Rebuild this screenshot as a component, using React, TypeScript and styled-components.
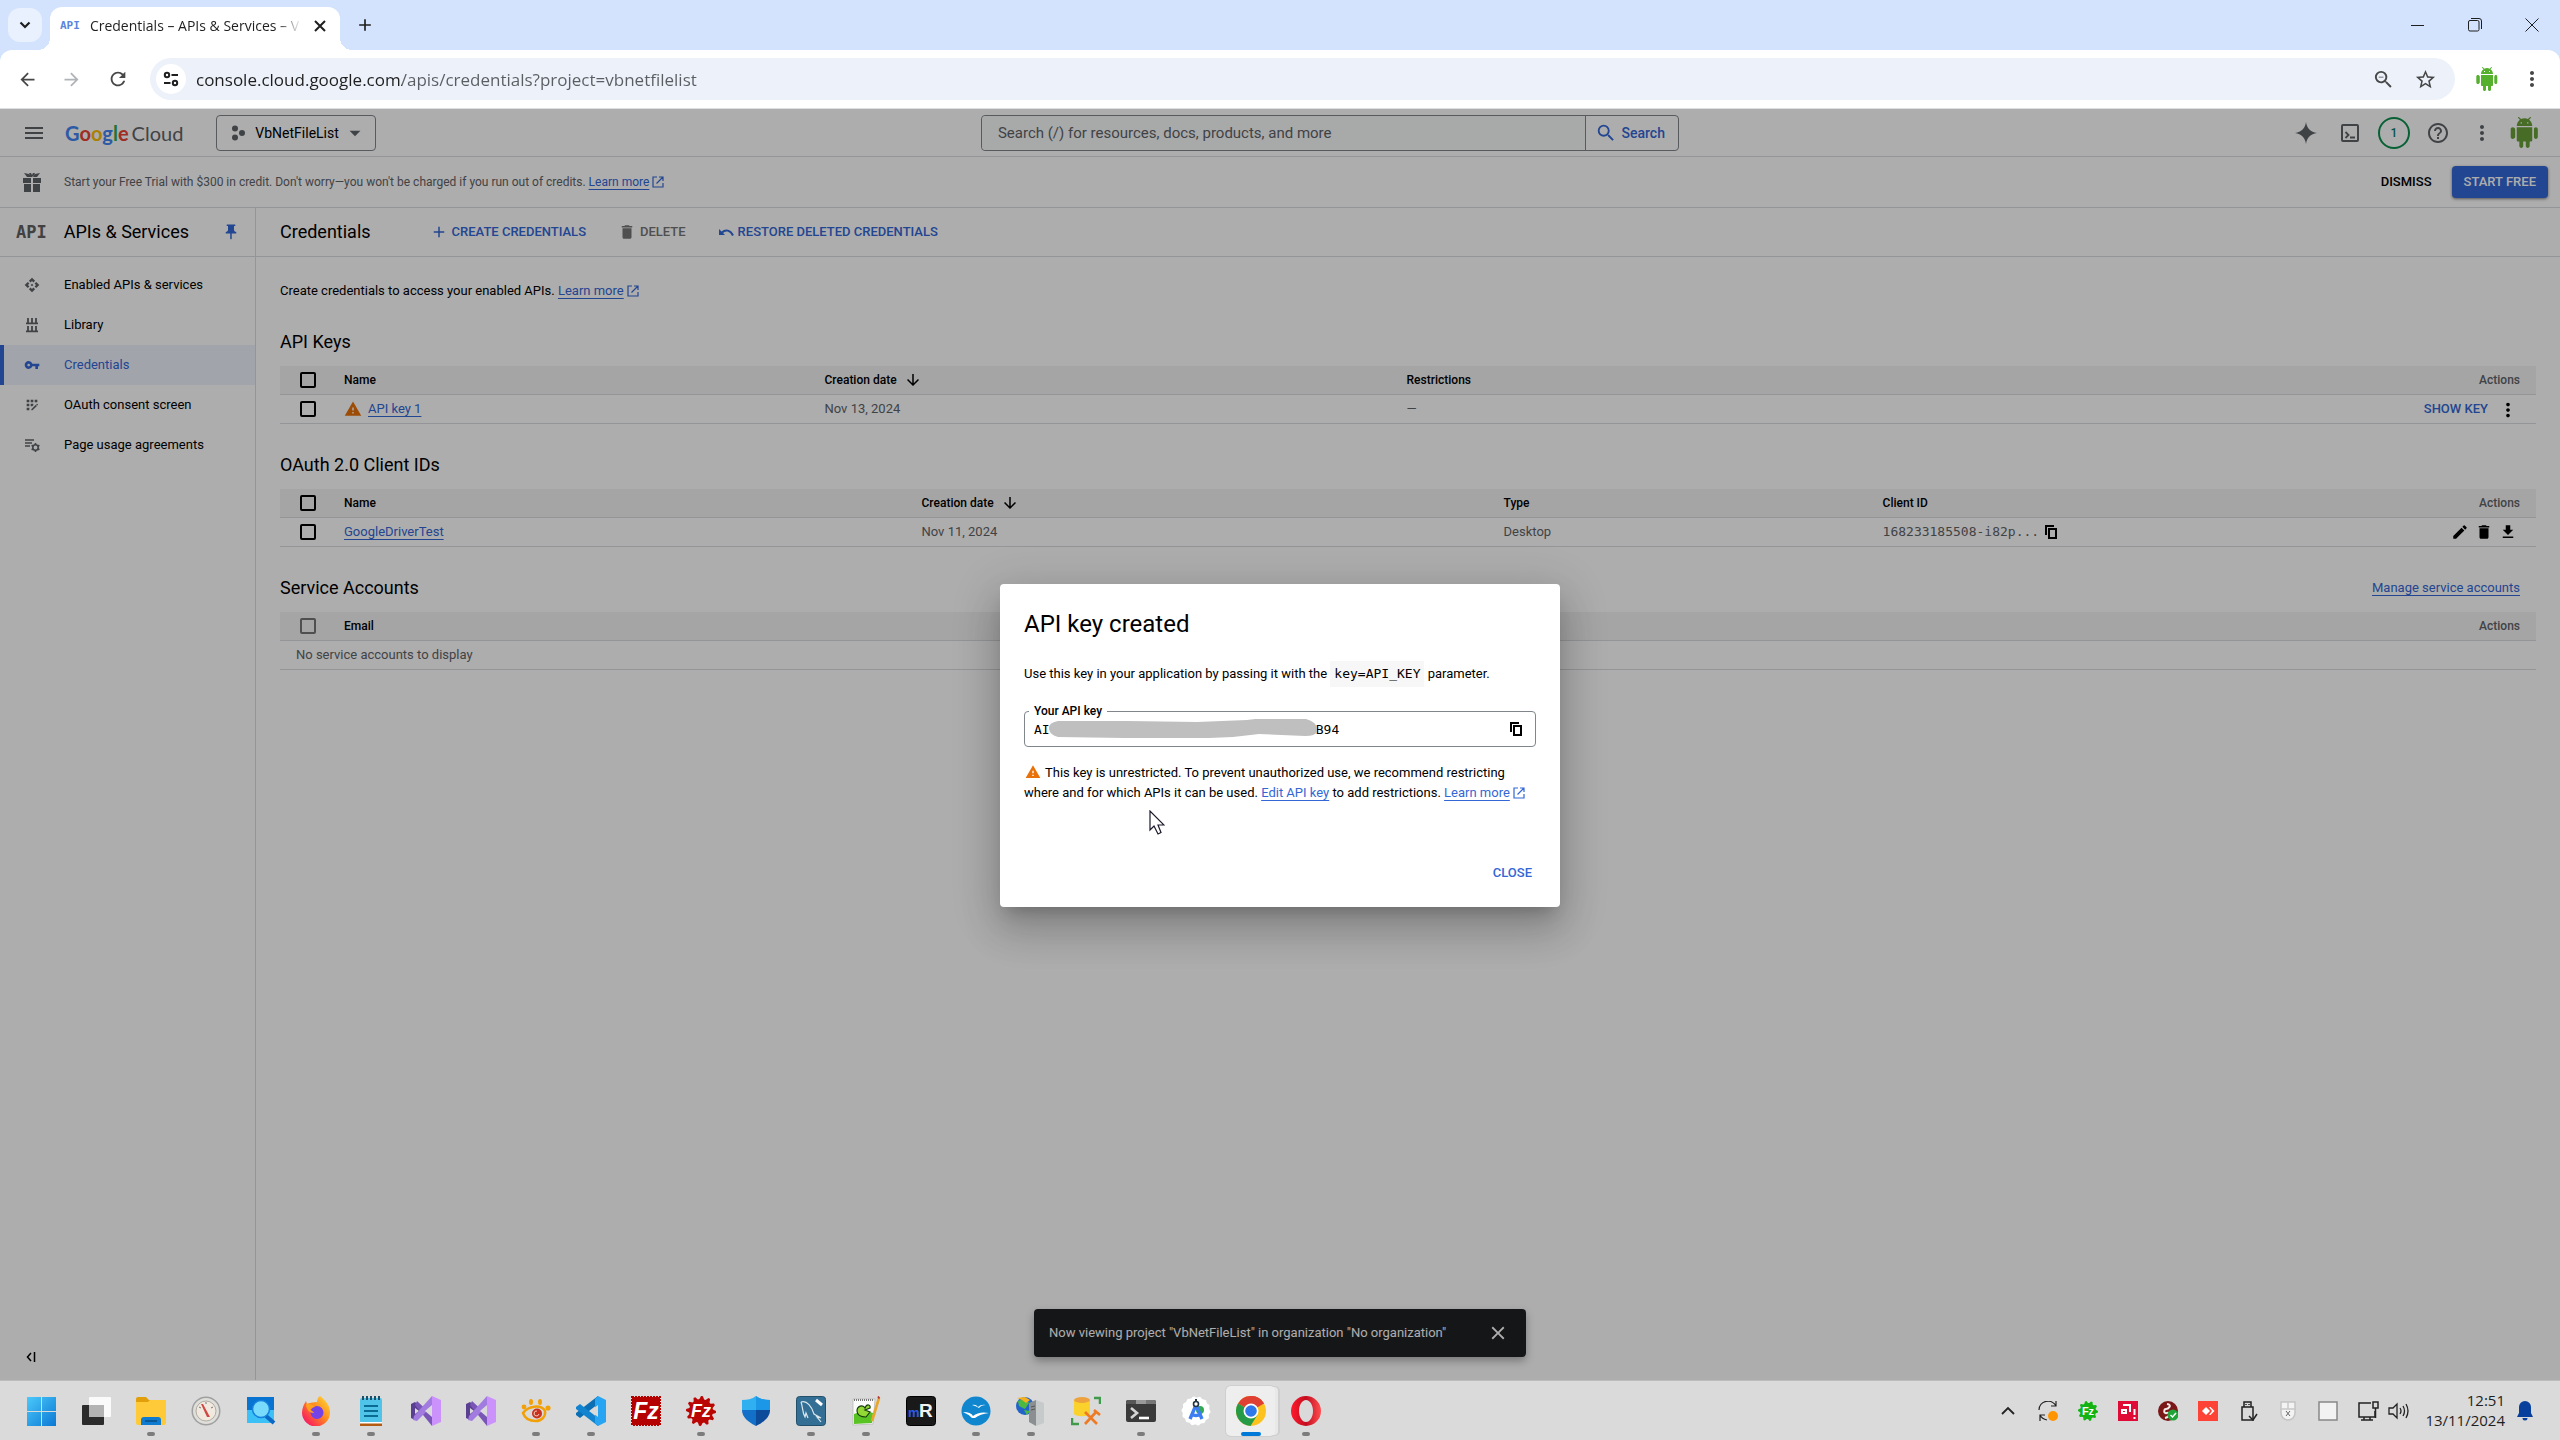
import React from "react";
import styled, { createGlobalStyle, css } from "styled-components";
import {
  MdMenu, MdSearch, MdHelpOutline, MdMoreVert, MdPushPin, MdAdd, MdDelete, MdVpnKey, MdWarning,
  MdEdit, MdFileDownload, MdApi, MdArrowDownward, MdClose, MdArrowDropDown,
  MdZoomOut, MdStarBorder, MdArrowBack, MdArrowForward, MdRefresh, MdAppRegistration,
} from "react-icons/md";

const roboto = `Roboto, "Liberation Sans", sans-serif`;
const segoe = `"Open Sans", "Noto Sans", sans-serif`;
const mono = `"DejaVu Sans Mono", "Liberation Mono", monospace`;
const blue = "#3367d6";
const grey = "#5f6368";
const line = "#dadce0";

const GlobalStyle = createGlobalStyle`
  *, *::before, *::after { box-sizing: border-box; }
  body { margin: 0; overflow: hidden; font-family: ${roboto}; color: #000; }
  button { font: inherit; border: 0; background: none; padding: 0; color: inherit; cursor: pointer; }
  h1, h2, p { margin: 0; font-weight: 400; }
  svg { display: block; flex: none; }
`;

const Screen = styled.div`
  display: flex;
  flex-direction: column;
  height: 100vh;
`;

/* ---------- browser ---------- */

const TabStrip = styled.header`
  display: flex;
  align-items: center;
  height: 50px;
  padding-left: 8px;
  background: #d3e3fd;
  color: #1f1f1f;
`;

const TabSearch = styled.button`
  display: grid;
  place-items: center;
  width: 34px;
  height: 34px;
  border-radius: 12px;
  background: #e9f1fe;
`;

const Tab = styled.div`
  position: relative;
  display: flex;
  align-items: center;
  gap: 10px;
  align-self: flex-end;
  width: 290px;
  height: 43px;
  margin-left: 8px;
  padding: 0 12px 6px 10px;
  border-radius: 12px 12px 0 0;
  background: #fff;
  font-family: ${segoe};
  font-size: 14px;
  &::before, &::after {
    content: "";
    position: absolute;
    bottom: 0;
    width: 12px;
    height: 12px;
  }
  &::before { right: 100%; background: radial-gradient(circle at 0 0, transparent 12px, #fff 12px); }
  &::after { left: 100%; background: radial-gradient(circle at 100% 0, transparent 12px, #fff 12px); }
`;

const TabTitle = styled.span`
  flex: 1;
  overflow: hidden;
  white-space: nowrap;
  mask-image: linear-gradient(to right, #000 88%, transparent);
`;

const ApiMark = styled.span<{ $small?: boolean }>`
  font-family: ${mono};
  font-weight: 700;
  line-height: 24px;
  font-size: ${p => (p.$small ? 11 : 17)}px;
  color: ${p => (p.$small ? "#5c85de" : "#616161")};
`;

const NewTab = styled.button`
  display: grid;
  place-items: center;
  width: 34px;
  height: 34px;
  margin-left: 8px;
`;

const WindowButtons = styled.div`
  display: flex;
  margin-left: auto;
`;

const WindowButton = styled.button`
  display: grid;
  place-items: center;
  width: 57px;
  height: 40px;
`;

const ToolbarBack = styled.div`
  background: #d3e3fd;
`;

const Toolbar = styled.div`
  display: flex;
  align-items: center;
  height: 59px;
  padding: 0 6px 0 7px;
  border-radius: 12px 12px 0 0;
  border-bottom: 1px solid #dcdfe3;
  background: #fff;
  color: #474747;
`;

const ToolButton = styled.button<{ $faded?: boolean; $width?: number }>`
  display: grid;
  place-items: center;
  width: ${p => p.$width ?? 45}px;
  height: 42px;
  color: ${p => (p.$faded ? "#b0b3b8" : "inherit")};
`;

const Omnibox = styled.div`
  display: flex;
  flex: 1;
  align-items: center;
  height: 42px;
  margin: 0 9px 0 10px;
  padding: 0 11px 0 6px;
  border-radius: 21px;
  background: #ecf1fa;
`;

const SiteInfo = styled.button`
  display: grid;
  place-items: center;
  width: 30px;
  height: 30px;
  margin-right: 10px;
  border-radius: 50%;
  background: #fff;
  color: #1f1f1f;
`;

const Address = styled.input`
  flex: 1;
  min-width: 0;
  border: 0;
  padding: 0;
  outline: 0;
  height: 32px;
  font-family: ${segoe};
  font-size: 17px;
  color: transparent;
  background: linear-gradient(to right, #1f1f1f 206px, #5a5d61 206px);
  background-clip: text;
`;

/* ---------- console ---------- */

const Console = styled.div`
  position: relative;
  display: flex;
  flex: 1;
  flex-direction: column;
  min-height: 0;
  background: #fff;
  font-size: 13px;
  line-height: 20px;
`;

const ConsoleHeader = styled.header`
  display: flex;
  align-items: center;
  justify-content: space-between;
  height: 48px;
  padding: 0 16px 0 22px;
  border-bottom: 1px solid ${line};
`;

const HeaderGroup = styled.div`
  display: flex;
  align-items: center;
  color: ${grey};
`;

const Logo = styled.a`
  display: flex;
  gap: 3px;
  margin: 0 33px 0 19px;
  font-family: Lato, sans-serif;
  font-size: 20px;
  line-height: 24px;
  text-decoration: none;
  color: ${grey};
`;

const LogoLetter = styled.span<{ $color: string }>`
  font-weight: 700;
  color: ${p => p.$color};
`;

const ProjectButton = styled.button`
  display: flex;
  align-items: center;
  gap: 3px;
  height: 36px;
  padding: 0 7px 0 13px;
  border: 1px solid #80868b;
  border-radius: 4px;
  font-size: 14px;
  color: #000;
  svg { color: ${grey}; }
`;

const ProjectName = styled.span`
  margin-left: 6px;
`;

const SearchForm = styled.form`
  display: flex;
  flex: 0 1 698px;
  height: 36px;
  border: 1px solid #80868b;
  border-radius: 4px;
`;

const SearchInput = styled.input`
  flex: 1;
  min-width: 0;
  border: 0;
  padding: 0 16px;
  border-radius: 4px;
  background: #f8f9fa;
  font-family: ${roboto};
  font-size: 15px;
  &::placeholder { color: ${grey}; opacity: 1; }
`;

const SearchButton = styled.button`
  display: flex;
  align-items: center;
  gap: 4px;
  padding: 0 13px 0 9px;
  border-left: 1px solid #80868b;
  font-size: 14px;
  font-weight: 500;
  color: ${blue};
`;

const IconButton = styled.button<{ $width?: number }>`
  display: grid;
  place-items: center;
  width: ${p => p.$width ?? 44}px;
  height: 36px;
`;

const TrialBadge = styled.span`
  display: grid;
  place-items: center;
  width: 32px;
  height: 32px;
  border: 2px solid #0d904f;
  border-radius: 50%;
  font-size: 12px;
  font-weight: 500;
  color: #0d7a6f;
`;

const Banner = styled.div`
  display: flex;
  align-items: center;
  height: 51px;
  padding: 0 12px 0 20px;
  border-bottom: 1px solid ${line};
  font-size: 12px;
  color: ${grey};
`;

const BannerText = styled.p`
  flex: 1;
  margin-left: 20px;
`;

const TextLink = styled.a`
  color: ${blue};
  text-decoration: underline;
  text-underline-offset: 3px;
`;

const ExternalMark = styled.svg`
  display: inline-block;
  margin-left: 3px;
  vertical-align: -2px;
  color: ${blue};
`;

const DismissButton = styled.button`
  height: 32px;
  padding: 0 20px;
  font-size: 13px;
  font-weight: 500;
  color: #000;
`;

const StartButton = styled.button`
  height: 32px;
  padding: 0 12px;
  border-radius: 4px;
  background: ${blue};
  box-shadow: 0 1px 3px rgba(0, 0, 0, 0.5);
  font-size: 13px;
  font-weight: 500;
  color: #fff;
`;

const Columns = styled.div`
  display: flex;
  flex: 1;
  min-height: 0;
`;

const Sidebar = styled.nav`
  display: flex;
  flex: none;
  flex-direction: column;
  width: 256px;
  border-right: 1px solid ${line};
`;

const SidebarTitle = styled.div`
  display: flex;
  align-items: center;
  justify-content: space-between;
  height: 49px;
  padding: 0 15px 0 16px;
  border-bottom: 1px solid ${line};
  color: ${blue};
`;

const SidebarHeading = styled.h2`
  display: flex;
  gap: 17px;
  font-size: 18px;
  line-height: 24px;
  color: #000;
`;

const NavList = styled.ul`
  flex: 1;
  margin: 0;
  padding: 8px 0 0;
  list-style: none;
`;

const NavLink = styled.a<{ $active?: boolean }>`
  display: flex;
  align-items: center;
  gap: 24px;
  height: 40px;
  padding-left: 20px;
  border-left: 4px solid transparent;
  text-decoration: none;
  color: #000;
  svg { color: ${grey}; }
  ${p => p.$active && css`
    border-color: ${blue};
    background: #edf2fd;
    color: ${blue};
    svg { color: ${blue}; }
  `}
`;

const CollapseButton = styled.button`
  display: grid;
  place-items: center;
  width: 62px;
  height: 46px;
`;

const Main = styled.main`
  flex: 1;
  min-width: 0;
`;

const ActionBar = styled.div`
  display: flex;
  align-items: center;
  height: 49px;
  padding-left: 24px;
  border-bottom: 1px solid ${line};
`;

const PageTitle = styled.h1`
  margin-right: 59px;
  font-size: 18px;
  line-height: 24px;
`;

const ActionButton = styled.button`
  display: flex;
  align-items: center;
  gap: 4px;
  margin-right: 32px;
  font-weight: 500;
  color: ${blue};
  &:disabled { color: #757575; cursor: default; }
`;

const Content = styled.div`
  padding: 24px 24px 0;
`;

const Section = styled.section`
  margin-top: 17px;
`;

const SectionHead = styled.div`
  display: flex;
  align-items: center;
  justify-content: space-between;
  height: 48px;
  padding-right: 16px;
`;

const SectionTitle = styled.h2`
  font-size: 18px;
  line-height: 24px;
`;

const Table = styled.table`
  width: 100%;
  table-layout: fixed;
  border-collapse: separate;
  border-spacing: 0;
`;

const Col = styled.col<{ $width?: string }>`
  width: ${p => p.$width ?? "auto"};
`;

const cell = css<{ $end?: boolean }>`
  height: 29px;
  padding: 0 8px;
  border-bottom: 1px solid ${line};
  text-align: ${p => (p.$end ? "right" : "left")};
  white-space: nowrap;
  &:first-child { padding-left: 20px; }
  &:last-child { padding-right: 16px; }
`;

const Th = styled.th`
  ${cell}
  background: #f3f3f3;
  font-size: 12px;
  font-weight: 500;
  color: ${p => (p.$end ? grey : "#000")};
`;

const Td = styled.td<{ $wide?: boolean }>`
  ${cell}
  color: ${grey};
  ${p => p.$wide && css`&:first-child { padding-left: 16px; }`}
`;

const Tick = styled.input`
  display: block;
  appearance: none;
  width: 16px;
  height: 16px;
  margin: 0;
  border: 2px solid #000;
  border-radius: 2px;
  &:disabled { border-color: #757575; }
`;

const CellLine = styled.span<{ $gap?: number; $end?: boolean }>`
  display: flex;
  align-items: center;
  gap: ${p => p.$gap ?? 8}px;
  height: 20px;
  justify-content: ${p => (p.$end ? "flex-end" : "flex-start")};
`;

const RowAction = styled.button`
  display: grid;
  place-items: center;
  min-width: 24px;
  height: 20px;
  color: #000;
`;

const ShowKey = styled.button`
  font-weight: 500;
  color: ${blue};
`;

const MonoText = styled.span`
  font-family: ${mono};
  font-size: 13px;
`;

const Snackbar = styled.div`
  position: absolute;
  left: 50%;
  bottom: 23px;
  display: flex;
  align-items: center;
  justify-content: space-between;
  width: 492px;
  height: 48px;
  padding: 0 17px 0 15px;
  transform: translateX(-50%);
  border-radius: 4px;
  background: #202124;
  box-shadow: 0 4px 8px rgba(0, 0, 0, 0.3);
  color: #fff;
`;

/* ---------- dialog ---------- */

const Scrim = styled.div`
  position: absolute;
  inset: 0;
  display: grid;
  place-items: center;
  padding-top: 2px;
  background: rgba(0, 0, 0, 0.32);
`;

const Dialog = styled.div`
  position: relative;
  width: 560px;
  padding: 24px 24px 16px;
  border-radius: 4px;
  background: #fff;
  box-shadow: 0 11px 15px -7px rgba(0, 0, 0, 0.2), 0 24px 38px 3px rgba(0, 0, 0, 0.14), 0 9px 46px 8px rgba(0, 0, 0, 0.12);
`;

const DialogTitle = styled.h2`
  margin-bottom: 21px;
  font-size: 24px;
  line-height: 32px;
`;

const DialogText = styled.p`
  line-height: 26px;
`;

const Code = styled.code`
  display: inline-block;
  padding: 0 4px;
  background: #f7f7f7;
  font-family: ${mono};
  font-size: 13px;
`;

const KeyField = styled.fieldset`
  position: relative;
  display: flex;
  align-items: flex-start;
  min-width: 0;
  height: 44px;
  margin: 16px 0;
  padding: 0 7px 0 9px;
  border: 1px solid #80868b;
  border-radius: 4px;
`;

const KeyLegend = styled.legend`
  margin-left: -5px;
  padding: 0 5px;
  font-size: 12px;
  font-weight: 500;
  line-height: 16px;
`;

const KeyInput = styled.input`
  flex: 1;
  min-width: 0;
  height: 20px;
  padding: 0;
  border: 0;
  outline: 0;
  font-family: ${mono};
  font-size: 13px;
`;

const Redaction = styled.svg`
  position: absolute;
  left: 24px;
  top: 0;
`;

const Warning = styled.p`
  svg { display: inline-block; }
`;

const WarningMark = styled(MdWarning)`
  margin: 0 4px 0 1px;
  vertical-align: -3px;
  color: #e8710a;
`;

const DialogActions = styled.div`
  display: flex;
  justify-content: flex-end;
  margin: 52px -4px 0 0;
`;

const CloseButton = styled.button`
  height: 36px;
  padding: 0 8px;
  font-weight: 500;
  color: ${blue};
`;

const Pointer = styled.svg`
  position: absolute;
  left: 149px;
  top: 226px;
`;

/* ---------- taskbar ---------- */

const Taskbar = styled.footer`
  display: flex;
  flex: none;
  align-items: center;
  justify-content: space-between;
  height: 60px;
  padding: 0 15px 0 13px;
  border-top: 1px solid #bdbdbd;
  background: #dadada;
`;

const Apps = styled.div`
  display: flex;
`;

const AppButton = styled.button<{ $state?: "open" | "active" }>`
  position: relative;
  display: grid;
  place-items: center;
  width: 49px;
  height: 50px;
  margin: 0 3px;
  border-radius: 5px;
  ${p => p.$state === "active" && css`
    background: #eeeeee;
    box-shadow: 4px 0 0 -1px #e8e8e8, 0 0 0 1px #cfcfcf, 5px 0 0 0 #cfcfcf;
  `}
  ${p => p.$state && css`
    &::after {
      content: "";
      position: absolute;
      bottom: 0;
      width: ${p.$state === "active" ? 20 : 8}px;
      height: 4px;
      border-radius: 2px;
      background: ${p.$state === "active" ? "#0078d7" : "#7c7c7c"};
    }
  `}
`;

const Tray = styled.div`
  display: flex;
  align-items: center;
  font-family: ${segoe};
  color: #1f1f1f;
`;

const TrayButton = styled.button<{ $width?: number }>`
  display: grid;
  place-items: center;
  width: ${p => p.$width ?? 40}px;
  height: 40px;
`;

const Clock = styled.time`
  width: 97px;
  padding-bottom: 2px;
  font-size: 15px;
  line-height: 20px;
  text-align: right;
`;

/* ---------- drawings ---------- */

const Android = ({ size, color }: { size: number; color: string }) => (
  <svg width={size} height={size} viewBox="0 0 24 24" fill={color}>
    <path d="M6 18c0 .55.45 1 1 1h1v3.5c0 .83.67 1.5 1.5 1.5s1.5-.67 1.5-1.5V19h2v3.5c0 .83.67 1.5 1.5 1.5s1.5-.67 1.5-1.5V19h1c.55 0 1-.45 1-1V8H6v10zM2.800 8C1.970 8 1.300 8.670 1.300 9.500v6c0 .83.67 1.500 1.500 1.500S4.800 16.330 4.800 15.500v-6C4.800 8.670 3.630 8 2.800 8zm18 0c-.83 0-1.500.67-1.500 1.500v6c0 .83.67 1.500 1.500 1.500s1.500-.67 1.500-1.500v-6c0-.83-.67-1.500-1.500-1.500zM15.530 2.160l1.300-1.300c.2-.2.2-.51 0-.71-.2-.2-.51-.2-.71 0l-1.480 1.480C13.850 1.230 12.950 1 12 1c-.96 0-1.860.23-2.660.63L7.850.15c-.2-.2-.51-.2-.71 0-.2.2-.2.51 0 .71l1.310 1.310C6.970 3.260 6 5.010 6 7h12c0-1.990-.97-3.750-2.470-4.840zM10 5H9V4h1v1zm5 0h-1V4h1v1z" />
  </svg>
);

const External = () => (
  <ExternalMark width="12" height="12" viewBox="0 0 12 12" fill="none" stroke="currentColor" strokeWidth="1.200">
    <path d="M5 1H1v10h10V7M7 1h4v4M11 1 4.500 7.500" />
  </ExternalMark>
);

const Copy = () => (
  <svg width="14" height="16" viewBox="0 0 14 16" fill="none" stroke="currentColor" strokeWidth="2"><path d="M2 11V2h8" /><path d="M5 5h7v9H5z" /></svg>
);

const Sparkle = () => (
  <svg width="22" height="22" viewBox="0 0 22 22" fill="currentColor"><path d="M11 0c.9 6.500 4.500 10.100 11 11-6.500.9-10.100 4.500-11 11-.9-6.500-4.500-10.100-11-11C6.500 10.100 10.100 6.500 11 0z" /></svg>
);

const Shell = () => (
  <svg width="18" height="18" viewBox="0 0 18 18" fill="none" stroke="currentColor" strokeWidth="2"><rect x="1" y="1" width="16" height="16" rx="1" /><path d="m4.500 8 3 3-3 3M9 13.500h5" strokeWidth="1.800" /></svg>
);

const ProjectIcon = () => (
  <svg width="16" height="16" viewBox="0 0 16 16" fill="currentColor"><circle cx="5" cy="3.500" r="3" /><circle cx="5" cy="12.500" r="3" /><circle cx="12" cy="8" r="3" /></svg>
);

const Gift = () => (
  <svg width="24" height="24" viewBox="0 0 24 24" fill="currentColor"><path d="M3 8h8v5H3zM13 8h8v5h-8zM4 14h7v8H4zM13 14h7v8h-7zM4 3l5 1 3 3H7zM20 3l-5 1-3 3h5zM9 3h2l1 2 1-2h2l-2 4h-2z" /></svg>
);

const Restore = () => (
  <svg width="16" height="16" viewBox="0 0 16 16" fill="none" stroke="currentColor" strokeWidth="2"><path d="M1 5v6h6L1 5z" fill="currentColor" stroke="none" /><path d="M4 8.500c3.500-3.500 8.500-2.500 11 3" /></svg>
);

const LibraryIcon = () => (
  <svg width="16" height="16" viewBox="0 0 16 16" fill="none" stroke="currentColor" strokeWidth="1.800"><path d="M2 6.300h12M4 1v5M8 1v5M12 1v5M2 14.300h12M4 9v5M8 9v5M12 9v5" /></svg>
);

const Agreements = () => (
  <svg width="16" height="16" viewBox="0 0 16 16" fill="none" stroke="currentColor" strokeWidth="1.600"><path d="M1 3h9M1 6h7M1 9h5" /><circle cx="11.500" cy="10.500" r="2.700" /><path d="M11.500 6v2M11.500 13v2M7.600 8.200l1.600 1M13.800 11.800l1.600 1M7.600 12.800l1.600-1M13.800 9.200l1.600-1" /></svg>
);

const SiteTune = () => (
  <svg width="16" height="16" viewBox="0 0 16 16" fill="none" stroke="currentColor" strokeWidth="2"><circle cx="4" cy="4" r="2.200" /><path d="M8.500 4H15M1 12h6.500" /><circle cx="12" cy="12" r="2.200" /></svg>
);

const VisualStudio = () => (
  <svg width="30" height="30" viewBox="0 0 30 30"><path d="M0 8l4-2 10 9-10 9-4-2z" fill="#5b3f91" /><path d="M4 12v6l4-3z" fill="#dadada" /><path d="M21 0v30L4 9l2-4 15 14z" fill="#7a55b8" /><path d="M21 0v10L6 25l-4-1 1-4z" fill="#a27be0" /><path d="M21 0l9 4v22l-9 4z" fill="#cc92fb" /><path d="M21 9v12l-7-6z" fill="#dadada" /></svg>
);

const gear = (cx: number, cy: number, r: number, n: number, depth: number) =>
  Array.from({ length: n * 4 }, (_, i) => {
    const a = (i / (n * 4)) * Math.PI * 2;
    const d = i % 4 < 2 ? r : r - depth;
    return `${(cx + d * Math.cos(a)).toFixed(2)},${(cy + d * Math.sin(a)).toFixed(2)}`;
  }).join(" ");

const Fz = ({ size = 22, x = 15, y = 23 }: { size?: number; x?: number; y?: number }) => (
  <text x={x} y={y} fontFamily="Liberation Sans" fontWeight="700" fontStyle="italic" fontSize={size} fill="#fff" textAnchor="middle">Fz</text>
);

const pic = (body: React.ReactNode) => <svg width="30" height="30" viewBox="0 0 30 30">{body}</svg>;

const apps: { name: string; state?: "open" | "active"; icon: React.ReactNode }[] = [
  { name: "Start", icon: pic(<><defs><linearGradient id="win" x1="0" y1="0" x2="1" y2="1" gradientUnits="objectBoundingBox"><stop stopColor="#4cc9fb" /><stop offset="1" stopColor="#0a78d4" /></linearGradient></defs><path d="M1 1h14v14H1zM16 1h14v14H16zM1 16h14v14H1zM16 16h14v14H16z" fill="url(#win)" /></>) },
  { name: "Task view", icon: pic(<><rect x="1" y="9" width="22" height="20" rx="1" fill="#2b2b2b" /><rect x="8" y="1" width="22" height="20" rx="1" fill="#fafafa" /><path d="M8 9h15v12H8z" fill="#b3b3b3" /></>) },
  { name: "File Explorer", state: "open", icon: pic(<><path d="M0 3q0-2 2-2h8l3 3h15q2 0 2 2v4H0z" fill="#e29f0c" /><path d="M0 6h12l2-2h16v23q0 2-2 2H2q-2 0-2-2z" fill="#ffca3a" /><path d="M5 29v-5q0-3 3-3h14q3 0 3 3v5z" fill="#0f7bd0" /><path d="M9 25h12" stroke="#074b85" strokeWidth="1.500" /></>) },
  { name: "Speed gauge", icon: pic(<><circle cx="15" cy="15" r="14.500" fill="#a0a0a0" /><circle cx="15" cy="15" r="13" fill="#dededb" /><circle cx="15" cy="15" r="10" fill="#f1e9df" stroke="#b3aca2" /><path d="m10 8 2 0 7 13-3 0z" fill="#cf4a42" /><path d="M8 11l2 1M22 11l-2 1M15 6v2" stroke="#777" /></>) },
  { name: "Search", icon: pic(<><path d="M1 1h27v13H1z" fill="#0873d1" /><path d="M1 14h27v13H1z" fill="#3cc1f7" /><path d="m20 20 8 7" stroke="#0b68c4" strokeWidth="4" /><circle cx="15" cy="13" r="8.500" fill="#79dbfb" stroke="#1580dd" strokeWidth="1.500" /></>) },
  { name: "Firefox", state: "open", icon: pic(<><defs><linearGradient id="fox" x1="1" y1="0" x2="0" y2="1"><stop stopColor="#ffe43a" /><stop offset=".45" stopColor="#ff8a1f" /><stop offset=".8" stopColor="#fb2b55" /><stop offset="1" stopColor="#e01290" /></linearGradient></defs><path d="M19 0c5 4 10 9 10 16a14 14 0 0 1-28 1C1 12 3 8 5 5l1 3 3-1c3-1 6-1 7-1 0-2 1-5 3-6z" fill="url(#fox)" /><circle cx="16" cy="16.500" r="6.500" fill="#7542e5" /><path d="M5 8c4-1 7 1 9 3-2 0-4 1-5 3 2 1 3 1 4 3-4 0-8-3-8-9z" fill="#ffa11d" /></>) },
  { name: "Notepad", state: "open", icon: pic(<><rect x="4" y="2" width="22" height="25" rx="2" fill="#4fc3e8" /><path d="M4 27h22v3H4z" fill="#b35a13" /><path d="M4 26h22v1.500H4z" fill="#fff" /><path d="M8 10h14M8 15h14M8 20h14" stroke="#0b6c93" strokeWidth="2" /><path d="M7 0v4M11 0v4M15 0v4M19 0v4M23 0v4" stroke="#184f6b" strokeWidth="2" /></>) },
  { name: "Visual Studio", icon: <VisualStudio /> },
  { name: "Visual Studio Preview", icon: <VisualStudio /> },
  { name: "XnView", state: "open", icon: pic(<><path d="M2 17c5-7 18-9 22-2 1 6-4 10-9 10-6 0-11-2-13-8z" fill="none" stroke="#f2a007" strokeWidth="2.500" /><circle cx="16" cy="17.500" r="5" fill="#c9301d" /><path d="M16 15a2.500 2.500 0 1 0 2 3" stroke="#f2cdbd" fill="none" /><circle cx="3" cy="11" r="2.400" fill="#f2a007" /><ellipse cx="10" cy="6" rx="2" ry="3" fill="#f2a007" /><ellipse cx="19" cy="6" rx="2" ry="3" fill="#f2a007" /><circle cx="27" cy="12" r="2.600" fill="#f2a007" /></>) },
  { name: "Visual Studio Code", state: "open", icon: pic(<><path d="M22 0v8L4 22l-4-3v-2z" fill="#0a6fb5" /><path d="M22 30v-8L4 8l-4 3v2z" fill="#1284cf" /><path d="M22 0l8 4v22l-8 4-3-3V3z" fill="#27a4f2" /><path d="M22 9v12l-8-6z" fill="#dadada" /></>) },
  { name: "FileZilla", icon: pic(<><rect x="1" y="1" width="28" height="28" fill="#b50000" stroke="#b50000" strokeWidth="2" strokeDasharray="2 1" /><Fz size={23} /></>) },
  { name: "FileZilla Server", state: "open", icon: pic(<><polygon points={gear(15, 15, 15, 12, 3)} fill="#b90504" /><Fz size={18} y={21} /></>) },
  { name: "Defender", icon: pic(<><path d="M15 0c4 3 9 4 14 4v10H1V4c5 0 10-1 14-4z" fill="#30b0f0" /><path d="M15 0c4 3 9 4 14 4v10H15z" fill="#1c96e6" /><path d="M1 14h14v16C7 26 1 21 1 14z" fill="#1270c8" /><path d="M29 14H15v16c8-4 14-9 14-16z" fill="#0b4b9a" /></>) },
  { name: "MySQL Workbench", state: "open", icon: pic(<><rect x=".5" y=".5" width="29" height="29" rx="3" fill="#336f94" stroke="#22506c" /><path d="M5 6c6-2 11 5 13 12l7 4-4-1 4 5M5 6c2 5 1 10 4 15l1-4 2 5" stroke="#dbe8f0" fill="none" strokeWidth="1.200" /><path d="m20 4 6 5" stroke="#fff" strokeWidth="3" /></>) },
  { name: "Notepad++", state: "open", icon: pic(<><path d="M2 3h22l-2 25-20 1z" fill="#fbfbfb" stroke="#aaa" strokeWidth=".6" /><path d="M3 18q10-5 19-1l-1 10-18 1z" fill="#58c322" /><path d="M6 15c0-5 6-7 8-3 2-5 6-3 5 0l-5 2 5 2-4 5c-5 0-9-2-9-6z" fill="#93d936" stroke="#183c10" strokeWidth="1.200" /><path d="M3 4h20" stroke="#777" strokeDasharray="1 1" strokeWidth="2" /><path d="M28 2 21 25" stroke="#e8a62b" strokeWidth="2.600" /><path d="m27 2 1.500-1" stroke="#b33" strokeWidth="2.600" /></>) },
  { name: "mRemoteNG", icon: pic(<><rect x=".5" y=".5" width="29" height="29" rx="3" fill="#191919" stroke="#000" /><text x="2" y="21" fontFamily="Liberation Sans" fontWeight="700" fontSize="13" fill="#2d5bea">m</text><text x="13" y="21" fontFamily="Liberation Sans" fontWeight="700" fontSize="19" fill="#f2f2f2">R</text></>) },
  { name: "OpenOffice", state: "open", icon: pic(<><circle cx="15" cy="15" r="14.500" fill="#1086cf" /><path d="M11 9q4-1 6 2 3-3 8-2-5 0-7 3-3-2-7-3zM2 16q8 0 10 4 6-5 16-3-9 1-14 5h-3q-4-4-9-6z" fill="#fff" /></>) },
  { name: "IIS Manager", state: "open", icon: pic(<><circle cx="9" cy="10" r="9" fill="#2263c9" /><path d="M2 5l8-3 3 5-4 6-6-3zM8 14l6 1-3 4z" fill="#4cb842" /><path d="M1 2l8-1 5 3-4 3-4-3z" fill="#f6b01c" /><path d="m13 7 7-3v26l-7-4z" fill="#8b8f91" /><path d="m20 4 8 3v20l-8 3z" fill="#c7cacb" /><path d="M15 11l4-1M15 14l4-1" stroke="#555" /></>) },
  { name: "Management Studio", icon: pic(<><path d="M3 4v14c2 3 14 3 16 0V4z" fill="#fbd22b" /><ellipse cx="11" cy="4" rx="8" ry="3" fill="#eda23f" /><path d="M23 2h6v6M1 22v6h7" fill="none" stroke="#3f9a4b" strokeWidth="2.500" /><path d="m14 16 12 12M26 15 14 28M23 14l6 5" stroke="#ee7a23" strokeWidth="2.600" /></>) },
  { name: "Terminal", state: "open", icon: pic(<><rect y="4" width="30" height="22" rx="2" fill="#3a3a3a" /><path d="M0 7q0-3 2-3h8v4H0z" fill="#565656" /><path d="M10 4h10v4H10z" fill="#999" /><path d="M20 4h8q2 0 2 3v1H20z" fill="#777" /><path d="m5 12 6 5-6 5" stroke="#d5d5d5" strokeWidth="2.600" fill="none" /><path d="M13 22h10" stroke="#fff" strokeWidth="2.600" /></>) },
  { name: "Android Studio", icon: pic(<><polygon points={gear(15, 15, 14.5, 14, 1)} fill="#fff" /><circle cx="19" cy="14" r="4" fill="#34a853" /><path d="M15 9 9 23M15 9l6 14M10 18q5 3 10 0" stroke="#3d7df2" strokeWidth="3.400" fill="none" /><circle cx="15" cy="8" r="2.500" fill="#fff" stroke="#234" strokeWidth="1.600" /><path d="M15 3v3" stroke="#234" strokeWidth="2" /></>) },
  { name: "Chrome", state: "active", icon: pic(<><circle cx="15" cy="15" r="15" fill="#fcc31e" /><path d="M15 15 2 7.500A15 15 0 0 1 28 7.500z" fill="#df4032" /><path d="M15 0A15 15 0 0 1 28 7.500H15z" fill="#df4032" /><path d="M2 7.500A15 15 0 0 0 14.500 30L21.500 18.700 15 15z" fill="#259b48" /><circle cx="15" cy="15" r="7.500" fill="#fff" /><circle cx="15" cy="15" r="5.800" fill="#2f78ea" /></>) },
  { name: "Opera", state: "open", icon: pic(<><defs><linearGradient id="opera" x1="0" x2="1"><stop stopColor="#ff1b2d" /><stop offset=".5" stopColor="#c30d20" /><stop offset="1" stopColor="#ff4e50" /></linearGradient></defs><path d="M15 0a15 15 0 1 0 0 30 15 15 0 0 0 0-30zm0 4c4 0 7 5 7 11s-3 11-7 11-7-5-7-11 3-11 7-11z" fill="url(#opera)" fillRule="evenodd" /></>) },
];

const tpic = (body: React.ReactNode, w = 20) => <svg width={w} height="20" viewBox={`0 0 ${w} 20`} fill="none" stroke="#222" strokeWidth="1.500">{body}</svg>;

const tray: { name: string; width?: number; icon: React.ReactNode }[] = [
  { name: "Show hidden icons", icon: tpic(<path d="m4 13 6-6 6 6" strokeWidth="1.800" />) },
  { name: "Update", icon: tpic(<><path d="M1 9a9 9 0 0 1 17-4M18 0v5h-5M2 20v-6h5M2 14q2 4 7 5" strokeWidth="1.200" /><circle cx="15" cy="15" r="5" fill="#ff9500" stroke="none" /></>) },
  { name: "FileZilla Server", icon: tpic(<><polygon points={gear(10, 10, 10, 10, 2)} fill="#12b312" stroke="none" /><text x="10" y="14" fontFamily="Liberation Sans" fontWeight="700" fontSize="11" fill="#fff" stroke="none" textAnchor="middle">Fz</text></>) },
  { name: "Graphics", icon: tpic(<><path d="M0 0h20v20H0z" fill="#df0b36" stroke="none" /><path d="M5 4h7v7M4 12V9h4v3z" stroke="#fff" strokeWidth="2" /><path d="M16.500 8v6M16.500 16v2" stroke="#fff" strokeWidth="2" /></>) },
  { name: "Scanner", icon: tpic(<><circle cx="10" cy="10" r="10" fill="#7c1717" stroke="none" /><path d="M9 3c6 1 1 5-1 5s-3 5 1 4 3 4-2 5" stroke="#f3eaea" strokeWidth="2" /><circle cx="15" cy="14" r="5.500" fill="#20a338" stroke="none" /><path d="m12.500 14 2 2 3.500-4" stroke="#fff" /></>) },
  { name: "Remote desktop", icon: tpic(<><path d="M0 0h20v20H0z" fill="#fe4336" stroke="none" /><path d="M8 6l4 4-4 4-4-4zM11 6l1.500 0 4 4-4 4H11l3-4z" fill="#fff" stroke="none" /></>) },
  { name: "Eject media", icon: tpic(<><path d="M6 6V1h7v5M4 6h11v13H4zM8 3v1M11 3v1" /><path d="m11 15 4 4 4-6" /></>) },
  { name: "Mouse", icon: tpic(<><path d="M3 1h14v11a7 7 0 0 1-14 0z" fill="#f3f3f3" stroke="#c4c4c4" /><path d="M3 8h14M10 1v7" stroke="#c8c8c8" /><path d="m8 10 4 5M12 10l-4 5" stroke="#666" strokeWidth="1" /></>) },
  { name: "Blank", icon: tpic(<rect x="1" y="1" width="18" height="18" fill="#f2f2f2" stroke="#888" />) },
  { name: "Network", icon: tpic(<><path d="M13 2H1v14h16v-6M6 16v3M12 16v3M3 19h12" /><path d="M15 1h5v6h-5zM17.500 7v10" /></>, 21) },
  { name: "Volume", width: 20, icon: tpic(<path d="M1 7h4l4-4v14l-4-4H1zM12 7q2 3 0 6M15 5q3 5 0 10M18 3q4 7 0 14" strokeWidth="1.300" />, 21) },
];

/* ---------- page ---------- */

const nav = [
  { text: "Enabled APIs & services", icon: <MdApi size={16} /> },
  { text: "Library", icon: <LibraryIcon /> },
  { text: "Credentials", icon: <MdVpnKey size={16} />, active: true },
  { text: "OAuth consent screen", icon: <MdAppRegistration size={16} /> },
  { text: "Page usage agreements", icon: <Agreements /> },
];

const letters: [string, string][] = [["G", "#4285f4"], ["o", "#ea4335"], ["o", "#fbbc04"], ["g", "#4285f4"], ["l", "#34a853"], ["e", "#ea4335"]];

const SortHead = () => <CellLine $gap={7}>Creation date <MdArrowDownward size={18} /></CellLine>;

const keyValue = "AI" + "\u00a0".repeat(34) + "B94";

export default function App() {
  return (
    <Screen>
      <GlobalStyle />
      <TabStrip>
        <TabSearch aria-label="Search tabs"><svg width="12" height="8" viewBox="0 0 12 8" fill="none" stroke="currentColor" strokeWidth="2.200"><path d="m1.500 1.500 4.500 4.500 4.500-4.500" /></svg></TabSearch>
        <Tab>
          <ApiMark $small>API</ApiMark>
          <TabTitle>Credentials – APIs & Services – V</TabTitle>
          <button aria-label="Close tab"><svg width="16" height="16" viewBox="0 0 16 16" stroke="currentColor" strokeWidth="2"><path d="m3 3 10 10M13 3 3 13" /></svg></button>
        </Tab>
        <NewTab aria-label="New tab"><MdAdd size={20} /></NewTab>
        <WindowButtons>
          <WindowButton aria-label="Minimise"><svg width="14" height="14" viewBox="0 0 14 14" stroke="currentColor"><path d="M0 7.500h13" /></svg></WindowButton>
          <WindowButton aria-label="Restore"><svg width="14" height="14" viewBox="0 0 14 14" fill="none" stroke="currentColor"><rect x=".5" y="2.500" width="10.500" height="10.500" rx="1.500" /><path d="M3 .5h8q2.500 0 2.500 2.500v8" /></svg></WindowButton>
          <WindowButton aria-label="Close"><svg width="14" height="14" viewBox="0 0 14 14" stroke="currentColor"><path d="m.5.5 13 13M13.500.5l-13 13" /></svg></WindowButton>
        </WindowButtons>
      </TabStrip>
      <ToolbarBack>
        <Toolbar>
          <ToolButton $width={40} aria-label="Back"><MdArrowBack size={21} /></ToolButton>
          <ToolButton $width={48} $faded aria-label="Forward"><MdArrowForward size={21} /></ToolButton>
          <ToolButton aria-label="Reload"><MdRefresh size={22} /></ToolButton>
          <Omnibox>
            <SiteInfo aria-label="Site information"><SiteTune /></SiteInfo>
            <Address aria-label="Address" defaultValue="console.cloud.google.com/apis/credentials?project=vbnetfilelist" />
            <ToolButton aria-label="Zoom"><MdZoomOut size={23} /></ToolButton>
            <ToolButton $width={38} aria-label="Bookmark"><MdStarBorder size={23} /></ToolButton>
          </Omnibox>
          <ToolButton aria-label="Profile"><Android size={24} color="#55b02e" /></ToolButton>
          <ToolButton aria-label="Menu"><MdMoreVert size={24} /></ToolButton>
        </Toolbar>
      </ToolbarBack>

      <Console>
        <ConsoleHeader>
          <HeaderGroup>
            <IconButton $width={24} aria-label="Navigation menu"><MdMenu size={24} /></IconButton>
            <Logo href="#home">
              <span>{letters.map(([l, c], i) => <LogoLetter key={i} $color={c}>{l}</LogoLetter>)}</span>
              <span>Cloud</span>
            </Logo>
            <ProjectButton><ProjectIcon /><ProjectName>VbNetFileList</ProjectName><MdArrowDropDown size={26} /></ProjectButton>
          </HeaderGroup>
          <SearchForm onSubmit={e => e.preventDefault()}>
            <SearchInput aria-label="Search" placeholder="Search (/) for resources, docs, products, and more" />
            <SearchButton><MdSearch size={22} />Search</SearchButton>
          </SearchForm>
          <HeaderGroup>
            <IconButton aria-label="Gemini"><Sparkle /></IconButton>
            <IconButton aria-label="Cloud Shell"><Shell /></IconButton>
            <IconButton aria-label="Notifications"><TrialBadge>1</TrialBadge></IconButton>
            <IconButton aria-label="Help"><MdHelpOutline size={24} /></IconButton>
            <IconButton aria-label="More"><MdMoreVert size={24} /></IconButton>
            <IconButton $width={40} aria-label="Account"><Android size={31} color="#689f38" /></IconButton>
          </HeaderGroup>
        </ConsoleHeader>

        <Banner>
          <Gift />
          <BannerText>
            Start your Free Trial with $300 in credit. Don't worry—you won't be charged if you run out of credits. <TextLink href="#trial">Learn more</TextLink><External />
          </BannerText>
          <DismissButton>DISMISS</DismissButton>
          <StartButton>START FREE</StartButton>
        </Banner>

        <Columns>
          <Sidebar>
            <SidebarTitle>
              <SidebarHeading><ApiMark>API</ApiMark>APIs & Services</SidebarHeading>
              <MdPushPin size={18} />
            </SidebarTitle>
            <NavList>
              {nav.map(n => <li key={n.text}><NavLink href="#nav" $active={n.active}>{n.icon}{n.text}</NavLink></li>)}
            </NavList>
            <CollapseButton aria-label="Collapse menu"><svg width="10" height="10" viewBox="0 0 10 10" fill="none" stroke="#000" strokeWidth="1.500"><path d="M5 1 1.500 5 5 9M8.500 0v10" /></svg></CollapseButton>
          </Sidebar>

          <Main>
            <ActionBar>
              <PageTitle>Credentials</PageTitle>
              <ActionButton><MdAdd size={18} />CREATE CREDENTIALS</ActionButton>
              <ActionButton disabled><MdDelete size={18} />DELETE</ActionButton>
              <ActionButton><Restore />RESTORE DELETED CREDENTIALS</ActionButton>
            </ActionBar>
            <Content>
              <p>Create credentials to access your enabled APIs. <TextLink href="#learn">Learn more</TextLink><External /></p>

              <Section>
                <SectionHead><SectionTitle>API Keys</SectionTitle></SectionHead>
                <Table>
                  <colgroup><Col $width="56px" /><Col $width="21.3%" /><Col $width="25.8%" /><Col /><Col $width="160px" /></colgroup>
                  <thead><tr>
                    <Th><Tick type="checkbox" aria-label="Select all API keys" /></Th><Th>Name</Th><Th><SortHead /></Th><Th>Restrictions</Th><Th $end>Actions</Th>
                  </tr></thead>
                  <tbody><tr>
                    <Td><Tick type="checkbox" aria-label="Select API key 1" /></Td>
                    <Td><CellLine $gap={6}><MdWarning size={18} color="#e8710a" /><TextLink href="#key">API key 1</TextLink></CellLine></Td>
                    <Td>Nov 13, 2024</Td>
                    <Td>—</Td>
                    <Td><CellLine $end><ShowKey>SHOW KEY</ShowKey><RowAction aria-label="More actions"><MdMoreVert size={22} /></RowAction></CellLine></Td>
                  </tr></tbody>
                </Table>
              </Section>

              <Section>
                <SectionHead><SectionTitle>OAuth 2.0 Client IDs</SectionTitle></SectionHead>
                <Table>
                  <colgroup><Col $width="56px" /><Col $width="25.6%" /><Col $width="25.8%" /><Col $width="16.8%" /><Col /><Col $width="160px" /></colgroup>
                  <thead><tr>
                    <Th><Tick type="checkbox" aria-label="Select all clients" /></Th><Th>Name</Th><Th><SortHead /></Th><Th>Type</Th><Th>Client ID</Th><Th $end>Actions</Th>
                  </tr></thead>
                  <tbody><tr>
                    <Td><Tick type="checkbox" aria-label="Select GoogleDriverTest" /></Td>
                    <Td><TextLink href="#client">GoogleDriverTest</TextLink></Td>
                    <Td>Nov 11, 2024</Td>
                    <Td>Desktop</Td>
                    <Td><CellLine $gap={0}><MonoText>168233185508-i82p...</MonoText><RowAction aria-label="Copy client ID"><Copy /></RowAction></CellLine></Td>
                    <Td><CellLine $gap={0} $end>
                      <RowAction aria-label="Edit"><MdEdit size={18} /></RowAction>
                      <RowAction aria-label="Delete"><MdDelete size={18} /></RowAction>
                      <RowAction aria-label="Download"><MdFileDownload size={18} /></RowAction>
                    </CellLine></Td>
                  </tr></tbody>
                </Table>
              </Section>

              <Section>
                <SectionHead><SectionTitle>Service Accounts</SectionTitle><TextLink href="#manage">Manage service accounts</TextLink></SectionHead>
                <Table>
                  <colgroup><Col $width="56px" /><Col /><Col $width="160px" /></colgroup>
                  <thead><tr>
                    <Th><Tick type="checkbox" disabled aria-label="Select all service accounts" /></Th><Th>Email</Th><Th $end>Actions</Th>
                  </tr></thead>
                  <tbody><tr><Td $wide colSpan={3}>No service accounts to display</Td></tr></tbody>
                </Table>
              </Section>
            </Content>
          </Main>
        </Columns>

        <Snackbar role="status">
          <span>Now viewing project "VbNetFileList" in organization "No organization"</span>
          <button aria-label="Dismiss"><MdClose size={22} /></button>
        </Snackbar>

        <Scrim>
          <Dialog role="dialog" aria-labelledby="dialog-title">
            <DialogTitle id="dialog-title">API key created</DialogTitle>
            <DialogText>Use this key in your application by passing it with the <Code>key=API_KEY</Code> parameter.</DialogText>
            <KeyField>
              <KeyLegend><label htmlFor="api-key">Your API key</label></KeyLegend>
              <KeyInput id="api-key" readOnly value={keyValue} />
              <Redaction width="268" height="22" viewBox="0 0 268 22"><path d="M9 2h70l69 1 50-2 16-2h38q14 2 16 10t-12 8l-46-2-26 3-24 1H75l-66-1q-8-2-9-8t9-8z" fill="#bfbfbf" /></Redaction>
              <RowAction aria-label="Copy key"><Copy /></RowAction>
            </KeyField>
            <Warning>
              <WarningMark size={16} />This key is unrestricted. To prevent unauthorized use, we recommend restricting<br />
              where and for which APIs it can be used. <TextLink href="#edit">Edit API key</TextLink> to add restrictions. <TextLink href="#more">Learn more</TextLink><External />
            </Warning>
            <DialogActions><CloseButton>CLOSE</CloseButton></DialogActions>
            <Pointer width="16" height="26" viewBox="0 0 16 26"><path d="M1 1v19l4-4 4 8 3-1.500-3-7.500h6z" fill="#fff" stroke="#1b1b2b" strokeWidth="1.200" /></Pointer>
          </Dialog>
        </Scrim>
      </Console>

      <Taskbar>
        <Apps>
          {apps.map(a => <AppButton key={a.name} $state={a.state} aria-label={a.name}>{a.icon}</AppButton>)}
        </Apps>
        <Tray>
          {tray.map(t => <TrayButton key={t.name} $width={t.width} aria-label={t.name}>{t.icon}</TrayButton>)}
          <Clock>12:51<br />13/11/2024</Clock>
          <TrayButton aria-label="Notifications"><svg width="16" height="20" viewBox="0 0 16 20" fill="#063f9c"><path d="M8 0a6 6 0 0 1 6 6v6l2 4H0l2-4V6a6 6 0 0 1 6-6zM5.500 17h5a2.500 2.500 0 0 1-5 0z" /></svg></TrayButton>
        </Tray>
      </Taskbar>
    </Screen>
  );
}
